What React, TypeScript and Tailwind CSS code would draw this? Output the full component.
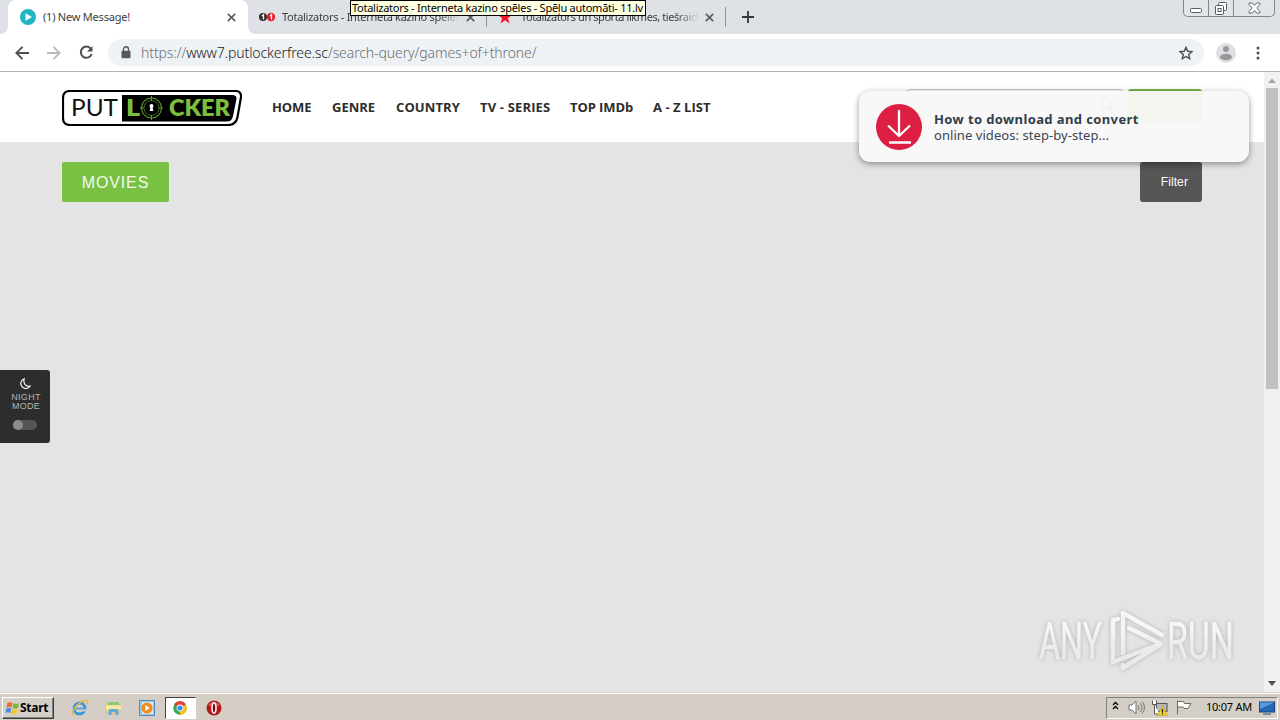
import React from 'react';

const tahoma = "font-['Noto_Sans','DejaVu_Sans',sans-serif]";

const CloseIcon: React.FC = () => (
  <svg width="9" height="9" viewBox="0 0 9 9" stroke="#5a5d61" strokeWidth="1.7" className="shrink-0">
    <path d="M0.8 0.8 8.2 8.2M8.2 0.8 0.8 8.2" />
  </svg>
);

const TabStrip: React.FC = () => (
  <div className="relative flex h-[34px] bg-[#dee1e6] text-[11px] text-[#3c4043]">
    <div className="relative ml-2 flex w-60 items-center rounded-t-lg bg-white pl-3">
      {/* Curved feet of the active tab */}
      <svg width="8" height="8" className="absolute bottom-0 -left-2" fill="#fff"><path d="M8 0v8H0c5 0 8-3 8-8z" /></svg>
      <svg width="8" height="8" className="absolute bottom-0 -right-2" fill="#fff"><path d="M0 0v8h8c-5 0-8-3-8-8z" /></svg>
      <svg width="16" height="16" viewBox="0 0 16 16" className="shrink-0">
        <circle cx="8" cy="8" r="8" fill="#1fb5c4" />
        <path d="M5.5 4.2 12 8l-6.5 3.8z" fill="#fff" />
      </svg>
      <span className="ml-[7px] w-[184px] whitespace-nowrap tracking-[-0.22px]">(1) New Message!</span>
      <CloseIcon />
    </div>
    <div className="flex w-[238px] items-center pl-[11px]">
      <svg width="16" height="16" viewBox="0 0 16 16" className="shrink-0">
        <circle cx="4" cy="8" r="4" fill="#3b2c2d" />
        <circle cx="12" cy="8" r="4.2" fill="#e8202c" />
        <path d="M3 7 4.5 5.7v4.8M11 7l1.5-1.3v4.8" fill="none" stroke="#fff" strokeWidth="1.3" />
      </svg>
      <span className="ml-[7px] w-[184px] overflow-hidden whitespace-nowrap tracking-[-0.28px] [mask-image:linear-gradient(to_right,#000_155px,transparent_178px)]">Totalizators - Interneta kazino spēles</span>
      <CloseIcon />
    </div>
    <div className="flex w-[239px] items-center">
      <div className="h-5 w-px shrink-0 bg-[#8f9297]" />
      <svg width="16" height="16" viewBox="0 0 16 16" className="ml-2.5 shrink-0" fill="#f2152a">
        <path d="m8 0.5 1.8 5.3h5.6l-4.5 3.4 1.7 5.3L8 11.3l-4.6 3.2 1.7-5.3L0.6 5.8h5.6z" />
      </svg>
      <span className="ml-2 w-[184px] overflow-hidden whitespace-nowrap tracking-[-0.42px] [mask-image:linear-gradient(to_right,#000_155px,transparent_178px)]">Totalizators un sporta likmes, tiešraides</span>
      <CloseIcon />
    </div>
    <div className="flex items-center">
      <div className="h-5 w-px bg-[#8f9297]" />
      <svg width="12" height="12" className="ml-4" stroke="#33363a" strokeWidth="1.8"><path d="M6 0v12M0 6h12" /></svg>
    </div>
    <div className="absolute top-0 right-[5px] flex h-[17px] w-[92px] rounded-b-[5px] border border-t-0 border-[#81868f] bg-[#e1e4e9]">
      <div className="flex w-[25px] justify-center border-r border-[#81868f]">
        <svg width="13" height="16" fill="#fff" stroke="#555a64"><rect x="0.5" y="8.5" width="11" height="4" rx="1" /></svg>
      </div>
      <div className="flex w-[25px] justify-center border-r border-[#81868f]">
        <svg width="14" height="16" fill="#fff" stroke="#555a64">
          <rect x="4.5" y="2.5" width="8" height="8" rx="1" /><rect x="1.5" y="5.5" width="8" height="9" rx="1" /><rect x="4" y="8.5" width="3" height="3" />
        </svg>
      </div>
      <div className="flex flex-1 justify-center">
        <svg width="13" height="16" viewBox="0 0 13 16" fill="#fff" stroke="#555a64" strokeWidth="0.9">
          <path d="M1 3h3.4l2.1 2.4L8.6 3H12v1.5L8.8 8l3.2 3.5V13H8.6L6.5 10.6 4.4 13H1v-1.5L4.2 8 1 4.5z" />
        </svg>
      </div>
    </div>
    <div className="absolute top-0 left-[350px] h-4 w-[296px] overflow-hidden border border-black bg-[#ffffe1] pl-px leading-[14px] whitespace-nowrap text-black tracking-[-0.26px]">
      Totalizators - Interneta kazino spēles - Spēļu automāti- 11.lv
    </div>
  </div>
);

const Toolbar: React.FC = () => (
  <div className="flex h-[38px] items-center border-b border-[#b1b3b1] bg-white">
    <svg width="14" height="14" viewBox="0 0 14 14" className="ml-[15px]" fill="none" stroke="#4c4f53" strokeWidth="1.9"><path d="M14 7H1.5M7.5 0.8 1.3 7l6.2 6.2" /></svg>
    <svg width="14" height="14" viewBox="0 0 14 14" className="ml-[18px]" fill="none" stroke="#b9bbbd" strokeWidth="1.9"><path d="M0 7h12.5M6.5 0.8 12.7 7l-6.2 6.2" /></svg>
    <svg width="15" height="15" viewBox="0 0 15 15" className="ml-[18px]" fill="none" stroke="#4c4f53" strokeWidth="2"><path d="M11.8 3.700A5.600 5.600 0 1 0 12.700 9" /><path d="M13.500 1v5.500H8z" fill="#4c4f53" stroke="none" /></svg>
    <div className="ml-[14px] flex h-[27px] w-[1096px] items-center rounded-full bg-[#eff2f5] pl-[13px]">
      <svg width="10" height="13" viewBox="0 0 10 13"><rect x="0.5" y="4.7" width="9" height="7.5" rx="1" fill="#54575b" /><path d="M2.5 5V3.2a2.5 2.5 0 0 1 5 0V5" fill="none" stroke="#54575b" strokeWidth="1.4" /></svg>
      <span className="ml-2.5 text-[14px] leading-5 font-light whitespace-nowrap tracking-[-0.1px] text-[#6b6f74]">
        https://<span className="text-[#17191c]">www7.putlockerfree.sc</span>/search-query/games+of+throne/
      </span>
      <svg width="14" height="14" viewBox="0 0 14 14" className="mr-[11px] ml-auto" fill="none" stroke="#4c4f53" strokeWidth="1.4"><path d="m7 1.3 1.7 4 4.3.4-3.3 2.8 1 4.2L7 10.5l-3.7 2.2 1-4.2L1 5.7l4.3-.4z" /></svg>
    </div>
    <svg width="20" height="20" viewBox="0 0 20 20" className="ml-3"><circle cx="10" cy="10" r="10" fill="#dddfe1" /><circle cx="10" cy="6" r="3" fill="#97999c" /><ellipse cx="10" cy="14" rx="6" ry="3.2" fill="#97999c" /></svg>
    <svg width="4" height="14" className="ml-5" fill="#4c4f53"><circle cx="2" cy="2" r="1.5" /><circle cx="2" cy="7" r="1.5" /><circle cx="2" cy="12" r="1.5" /></svg>
  </div>
);

const Logo: React.FC = () => (
  <svg width="180" height="36" viewBox="0 0 180 36" className="ml-[62px] shrink-0">
    <path d="M8 1h165q6.500 0 6 6l-3.500 20q-1.500 8-9.500 8H8q-7 0-7-7V8q0-7 7-7z" fill="#fff" stroke="#000" strokeWidth="2.2" />
    <path d="M60 5h110q5 0 4.500 4L171 26q-1 5.500-6 5.500H60z" fill="#000" />
    <g className="font-['Lato',sans-serif]">
      <text x="9" y="26" fontSize="22.500" fill="#111" textLength="47" lengthAdjust="spacingAndGlyphs">PUT</text>
      <g fontSize="22.500" fontWeight="800" fill="#7cbf3c">
        <text x="64" y="26" textLength="14" lengthAdjust="spacingAndGlyphs">L</text>
        <text x="107" y="26" textLength="61" lengthAdjust="spacingAndGlyphs">CKER</text>
      </g>
    </g>
    <circle cx="89.500" cy="18" r="10" fill="none" stroke="#62982f" strokeWidth="1.1" />
    <circle cx="89.500" cy="18" r="7.500" fill="none" stroke="#477123" strokeWidth="0.900" />
    <path d="M89.500 6v5M89.500 25v5M78 18h4M97 18h4" stroke="#62982f" />
    <circle cx="89.500" cy="16" r="2" fill="#fff" />
    <path d="M88.700 16h1.600l1 5h-3.600z" fill="#fff" />
  </svg>
);

const NavBar: React.FC = () => (
  <div className="flex h-[70px] items-center bg-white pt-0.5">
    <Logo />
    <nav className="-mt-px ml-[30px] flex font-['Open_Sans','Noto_Sans',sans-serif] text-[13px] font-bold whitespace-nowrap text-[#2d2d2d]">
      <span className="w-[60px] tracking-[-0.1px]">HOME</span>
      <span className="w-16 tracking-[0px]">GENRE</span>
      <span className="w-[84px] tracking-[0.1px]">COUNTRY</span>
      <span className="w-[90px] tracking-[0.15px]">TV - SERIES</span>
      <span className="w-[83px] tracking-[-0.1px]">TOP IMDb</span>
      <span className="tracking-[0.05px]">A - Z LIST</span>
    </nav>
    <div className="mt-[15px] mr-[5px] ml-auto h-[34px] w-[216px] self-start rounded-[3px] border border-[#b8bdca]" />
    <div className="mt-[15px] mr-[62px] h-[34px] w-[74px] self-start rounded-[3px] bg-[#7cb342]" />
  </div>
);

// Push message that covers the search box
const Notice: React.FC = () => (
  <div className="absolute top-[19px] right-[15px] flex h-[71px] w-[390px] items-center rounded-[11px] bg-[#f8f8f8] pl-[17px] shadow-[0_2px_6px_rgba(0,0,0,0.4)]">
    <div className="absolute top-0 right-[47px] h-[31px] w-[74px] bg-[#f3f6ef]" />
    <svg width="18" height="18" viewBox="0 0 18 18" className="absolute top-1.5 left-[238px]" fill="none" stroke="#f3f3f4" strokeWidth="3"><circle cx="8" cy="7" r="5" /><path d="m12 11 5 5" /></svg>
    <svg width="46" height="46" viewBox="0 0 46 46" className="shrink-0">
      <circle cx="23" cy="23" r="23" fill="#dc1f43" />
      <path d="M23 6v26M12 21.500l11 10.500 11-10.500M13 38.500h22" fill="none" stroke="#fff" strokeWidth="2.300" />
    </svg>
    <div className="relative ml-3 text-[13px] leading-4 whitespace-nowrap text-[#3c4653] font-['Noto_Sans',sans-serif]">
      <div className="font-bold tracking-[0.39px] text-[#323d4b]">How to download and convert</div>
      <div className="tracking-[0.06px]">online videos: step-by-step...</div>
    </div>
  </div>
);

const NightMode: React.FC = () => (
  <div className="absolute top-[298px] left-0 flex h-[73px] w-[50px] flex-col items-center rounded-r-[3px] bg-[#2d2d2d] pt-[8px]">
    <svg width="11" height="11" viewBox="0 0 11 11" fill="none" stroke="#fff" strokeWidth="1.100"><path d="M4.200 0.800a5 5 0 1 0 6 7.200C6 9 2.800 5.500 4.200 0.800z" /></svg>
    <div className="mt-1 pl-0.5 text-center font-['Liberation_Sans',sans-serif] text-[9px] leading-[9px] tracking-[0.300px] text-[#b5b5b5]">NIGHT<br />MODE</div>
    <div className="mt-[9px] h-2.5 w-6 rounded-full bg-[#555]">
      <div className="h-2.5 w-2.5 rounded-full bg-[#8c8c8c]" />
    </div>
  </div>
);

const Watermark: React.FC = () => (
  <svg width="200" height="66" viewBox="0 0 200 66" className="absolute top-[536px] left-[1036px] drop-shadow-[0_0_2px_rgba(0,0,0,0.22)]">
    <defs>
      <linearGradient id="fade" gradientUnits="userSpaceOnUse" x1="0" y1="0" x2="0" y2="62">
        <stop offset="0.4" stopColor="#f5f5f5" />
        <stop offset="0.58" stopColor="#ececec" />
        <stop offset="1" stopColor="#e9e9e9" />
      </linearGradient>
    </defs>
    <g className="font-['Roboto',sans-serif]" fontSize="51" fill="url(#fade)" stroke="url(#fade)" strokeWidth="0.500">
      <text x="3" y="51" textLength="63" lengthAdjust="spacingAndGlyphs">ANY</text>
      <text x="131" y="51" textLength="67" lengthAdjust="spacingAndGlyphs">RUN</text>
    </g>
    <g fill="none" stroke="url(#fade)" strokeWidth="4.500" strokeLinecap="round" strokeLinejoin="round">
      <path d="M87 45V5l39 22" />
      <path d="M82 11 77 12v42l47-18" />
      <path d="M93 20l32 16-38 24v-3" />
    </g>
  </svg>
);

const Scrollbar: React.FC = () => (
  <div className="flex w-4 flex-col items-center bg-[#f1f1f1]">
    <svg width="16" height="16" fill="#a3a3a3"><path d="m4 11 4-4.500 4 4.500z" /></svg>
    <div className="h-[301px] w-3 bg-[#c1c1c1]" />
    <svg width="16" height="16" className="mt-auto" fill="#505050"><path d="m4 5 4 5 4-5z" /></svg>
  </div>
);

const Taskbar: React.FC = () => (
  <div className="flex h-7 items-center border-t border-[#d4d0c8] bg-[#d4cec6] text-[11px] text-black shadow-[inset_0_1px_#fff]">
    <div className="mt-0.5 ml-0.5 flex h-[22px] w-[52px] items-center border border-t-white border-r-[#404040] border-b-[#404040] border-l-white bg-[#d4d0c8] pl-0.5 shadow-[inset_-1px_-1px_#808080]">
      <svg width="15" height="14" viewBox="0 0 15 14" className="shrink-0">
        <path d="M2.500 2q2.500-1.500 5 0L6.500 6.500q-2.500-1.500-5 0z" fill="#ed6b2d" />
        <path d="M8.500 2.300q3 1.500 5.500 0L13 7q-2.500 1.500-5.500 0z" fill="#75b843" />
        <path d="M1.300 7.500q2.500-1.500 5 0L5.300 12q-2.500-1.500-5 0z" fill="#4a8ede" />
        <path d="M7.300 8q2.500 1.500 5.500 0l-1 4.500q-2.500 1.500-5.500 0z" fill="#f5c62e" />
      </svg>
      <span className="text-[12px] font-bold tracking-[-0.250px]">Start</span>
    </div>
    <svg width="18" height="18" viewBox="0 0 18 18" className="mt-0.5 ml-[17px]" fill="none">
      <circle cx="8.500" cy="9.500" r="5.500" stroke="#3d94d9" strokeWidth="2.800" />
      <path d="M4 9.500h9.500" stroke="#54a9e6" strokeWidth="2" />
      <path d="M11 10.500h5v2h-4z" fill="#d4cec6" />
      <path d="M2 16C-2 13 11-1 16 2q1.200 1 0 3" stroke="#e2bd38" strokeWidth="1.500" />
    </svg>
    <svg width="18" height="18" viewBox="0 0 18 18" className="mt-0.5 ml-4">
      <path d="M1 4h6l1.500 1.500H15V14H1z" fill="#ecd982" stroke="#cbb457" strokeWidth="0.600" />
      <path d="M3 3h11v3H3z" fill="#91c774" /><path d="M1 6.500h15v4H1z" fill="#f7e9a3" />
      <path d="M3.500 16v-4q0-2 2-2h6q2 0 2 2v4h-3v-3h-4v3z" fill="#60aad8" />
    </svg>
    <svg width="16" height="16" viewBox="0 0 16 16" className="mt-0.5 ml-4">
      <rect x="0.500" y="0.500" width="15" height="15" fill="#9dc5e6" stroke="#538cba" />
      <rect x="3" y="2" width="11" height="12" fill="#d8eaf7" />
      <circle cx="8" cy="8" r="5.500" fill="#f28a1c" /><path d="m6.300 5 4.500 3-4.500 3z" fill="#fff" />
    </svg>
    <div className="mt-0.5 ml-2.5 flex h-[22px] w-[31px] items-center justify-center border border-t-[#404040] border-r-white border-b-white border-l-[#404040] bg-white pr-px">
      <svg width="14" height="14" viewBox="0 0 14 14">
        <circle cx="7" cy="7" r="6.800" fill="#3aa757" />
        <path d="M7 7 1.100 3.600A6.800 6.800 0 0 1 12.900 3.600z" fill="#e04134" />
        <path d="M7 7 12.900 3.600A6.800 6.800 0 0 1 7 13.800z" fill="#fbc116" />
        <circle cx="7" cy="7" r="3.400" fill="#fff" /><circle cx="7" cy="7" r="2.600" fill="#4285f4" />
      </svg>
    </div>
    <svg width="16" height="16" viewBox="0 0 16 16" className="mt-0.5 ml-2.5">
      <circle cx="8" cy="8" r="7.500" fill="#b7161b" /><path d="M2 5q6-7 12 0-6 3-12 0z" fill="#d95555" />
      <ellipse cx="8" cy="8" rx="2" ry="5" fill="#7d0b0f" stroke="#fff" strokeWidth="1.500" />
    </svg>
    <div className="mt-0.5 mr-0.5 ml-auto flex h-[22px] w-[172px] items-center border border-t-[#808080] border-r-white border-b-white border-l-[#808080]">
      <svg width="7" height="9" viewBox="0 0 7 9" className="mb-1 ml-[5px]" fill="none" stroke="#000" strokeWidth="1.300"><path d="m1 4 2.500-2.500L6 4M1 8l2.500-2.500L6 8" /></svg>
      <svg width="17" height="15" viewBox="0 0 17 15" className="ml-[9px]" fill="#fff" stroke="#74716c">
        <path d="M1 5h3l4-4v13L4 10H1z" /><path d="M10 5q2 2.500 0 5M12 3q4 4.500 0 9M14 1.500q5 6 0 12" fill="none" />
      </svg>
      <svg width="16" height="16" viewBox="0 0 16 16" className="ml-[7px]">
        <rect x="4.500" y="3.500" width="10.500" height="8" fill="#b5b8ba" stroke="#565656" />
        <path d="M0.500 0.500v4h4v-4M2.500 4.500V14h5" stroke="#565656" fill="#fff" />
        <path d="m10.500 6 5 9.500h-10z" fill="#f7d321" stroke="#b49018" strokeWidth="0.500" />
        <path d="M10.500 9v3.500M10.500 13.300v1.200" stroke="#222" strokeWidth="1.300" />
      </svg>
      <svg width="16" height="15" viewBox="0 0 16 15" className="ml-2" fill="#fff" stroke="#6b6965"><path d="M1.500 14.500v-14M1.500 1.500h6l1 2h6.500l-3 5H8l-1-1.500H1.500" /></svg>
      <span className="ml-[14px] w-[51px] whitespace-nowrap text-[11px] tracking-[-0.250px]">10:07 AM</span>
      <svg width="16" height="14" viewBox="0 0 16 14" className="ml-0.5">
        <rect x="0.500" y="1" width="15" height="10" fill="#2866b4" stroke="#174483" /><path d="M1 1.500h14L1 8z" fill="#589be0" /><path d="M4 13h8" stroke="#394d68" />
      </svg>
    </div>
  </div>
);

const App: React.FC = () => (
  <div className={`flex h-[720px] w-[1280px] flex-col overflow-hidden bg-[#e4e4e4] ${tahoma}`}>
    <TabStrip />
    <Toolbar />
    <div className="flex h-[620px]">
      <main className="relative w-[1264px]">
        <NavBar />
        <div className="mt-5 mr-[62px] ml-[62px] flex justify-between">
          <div className="flex h-10 w-[107px] items-center justify-center rounded-[2px] bg-[#79c142] pt-px font-['Liberation_Sans',sans-serif] text-[16px] tracking-[0.850px] text-[#f3faed]">MOVIES</div>
          <div className="flex h-10 w-[62px] items-center justify-end rounded-[3px] bg-[#555] pr-[14px] font-['Liberation_Sans',sans-serif] text-[12px] tracking-[0.100px] text-white">Filter</div>
        </div>
        <Notice />
        <NightMode />
        <Watermark />
      </main>
      <Scrollbar />
    </div>
    <Taskbar />
  </div>
);

export default App;
